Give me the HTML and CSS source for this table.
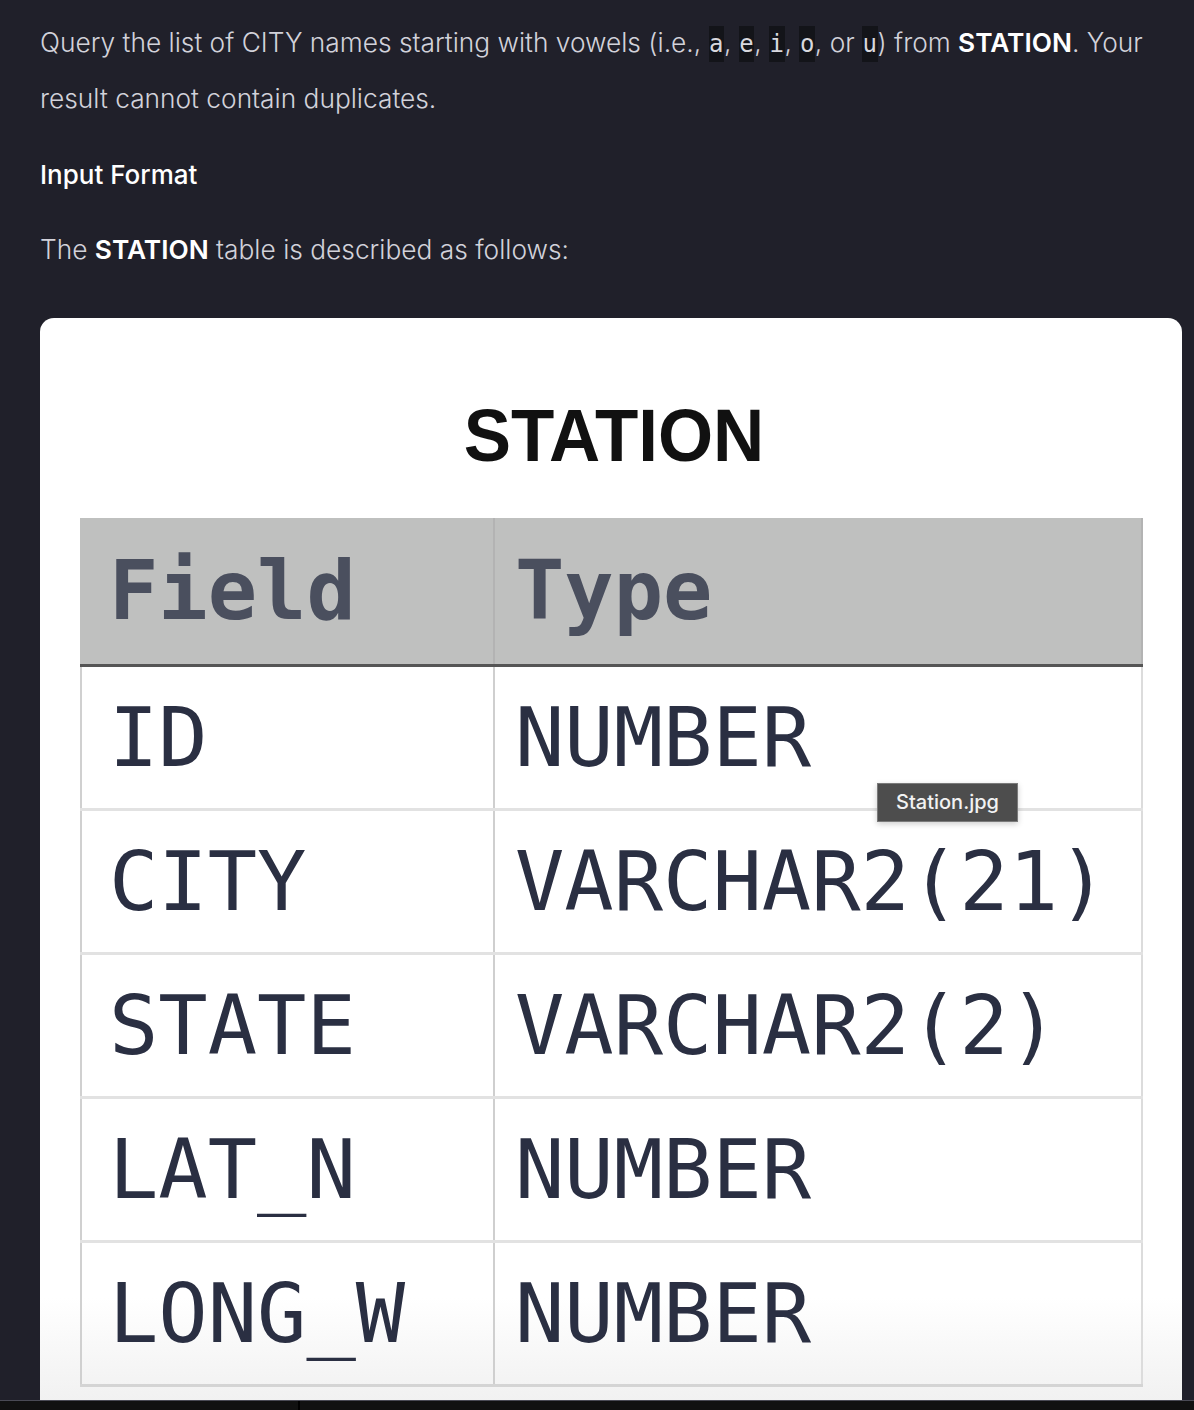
FILE: index.html
```html
<!DOCTYPE html>
<html>
<head>
<meta charset="utf-8">
<link rel="stylesheet" href="styles.css">
</head>
<body>
<div class="page">
  <p class="text first">Query the list of CITY names starting with vowels (i.e., <code>a</code>, <code>e</code>, <code>i</code>, <code>o</code>, or <code>u</code>) from <strong>STATION</strong>. Your result cannot contain duplicates.</p>
  <h3 class="heading">Input Format</h3>
  <p class="text">The <strong>STATION</strong> table is described as follows:</p>
  <div class="card">
    <div class="title"><span>STATION</span></div>
    <table class="schema">
      <thead>
        <tr><th class="c1">Field</th><th class="c2">Type</th></tr>
      </thead>
      <tbody>
        <tr><td class="c1">ID</td><td class="c2">NUMBER</td></tr>
        <tr><td class="c1">CITY</td><td class="c2">VARCHAR2(21)</td></tr>
        <tr><td class="c1">STATE</td><td class="c2">VARCHAR2(2)</td></tr>
        <tr><td class="c1">LAT_N</td><td class="c2">NUMBER</td></tr>
        <tr><td class="c1">LONG_W</td><td class="c2">NUMBER</td></tr>
      </tbody>
    </table>
    <div class="tooltip">Station.jpg</div>
  </div>
</div>
<div class="statusbar"><span class="divider"></span></div>
</body>
</html>
```

FILE: styles.css
```css
html, body {
  margin: 0;
  padding: 0;
}
body {
  background: #20202a;
  height: 1410px;
  overflow: hidden;
  font-family: "Inter", "Lato", sans-serif;
}
.page {
  padding: 15px 12px 0 40px;
}
.text {
  margin: 0;
  font-size: 26.3px;
  line-height: 56px;
  font-weight: 300;
  color: #d2d2da;
}
.text strong {
  font-weight: 600;
  color: #ffffff;
}
.text code {
  display: inline-block;
  font-family: "DejaVu Sans Mono", monospace;
  font-size: 24px;
  height: 36px;
  line-height: 36px;
  vertical-align: baseline;
  background: #131419;
  color: #d8d8de;
  padding: 0 0.5px;
}
.heading {
  margin: 20px 0 19px;
  font-size: 26px;
  line-height: 56px;
  font-weight: 500;
  color: #ffffff;
}
.card {
  position: relative;
  margin-top: 40px;
  background: linear-gradient(#ffffff 0, #ffffff 980px, #f0f0f0 1090px);
  border-radius: 14px 14px 0 0;
  height: 1200px;
  padding: 80px 39px 0 40px;
}
.title {
  text-align: center;
  height: 120px;
}
.title span {
  display: inline-block;
  font-family: "Liberation Sans", Arial, sans-serif;
  font-weight: 700;
  font-size: 75px;
  line-height: 74px;
  color: #111;
  transform: scaleX(0.945);
  margin-left: 6px;
}
.schema {
  width: 100%;
  border-collapse: collapse;
  table-layout: fixed;
  font-family: "DejaVu Sans Mono", monospace;
}
.schema th, .schema td {
  box-sizing: border-box;
}
.schema th {
  background: #bfc0bf;
  height: 147px;
  font-size: 82px;
  font-weight: 700;
  color: #4a4f5e;
  text-align: left;
  border-bottom: 3px solid #555;
  padding: 0;
}
.schema td {
  height: 144px;
  font-size: 82px;
  color: #2a2f42;
  border-bottom: 3px solid #e2e2e2;
  padding: 0;
}
.schema .c1 {
  width: 413px;
  padding-left: 27px;
  border-left: 2px solid #d0d0d0;
  border-right: 2px solid #cfcfcf;
}
.schema .c2 {
  padding-left: 20px;
  border-right: 2px solid #dcdcdc;
}
.schema thead .c1, .schema thead .c2 {
  border-left-color: #bfc0bf;
  border-right-color: #b3b3b3;
}
.schema tbody tr:last-child td {
  border-bottom-color: #d4d4d4;
}
.tooltip {
  position: absolute;
  left: 837px;
  top: 465px;
  width: 139px;
  height: 37px;
  background: #4d4d4d;
  border: 1px solid #7a7a7a;
  color: #f2f2f2;
  font-family: "Inter", sans-serif;
  font-weight: 500;
  font-size: 20px;
  line-height: 37px;
  text-align: center;
  box-shadow: 0 2px 6px rgba(0,0,0,0.2);
}
.statusbar {
  position: fixed;
  left: 0;
  right: 0;
  bottom: 0;
  height: 9px;
  background: #111111;
  border-top: 1px solid #4a4a55;
}
.divider {
  position: absolute;
  left: 298px;
  top: 0;
  bottom: 0;
  width: 2px;
  background: #000;
}
```
